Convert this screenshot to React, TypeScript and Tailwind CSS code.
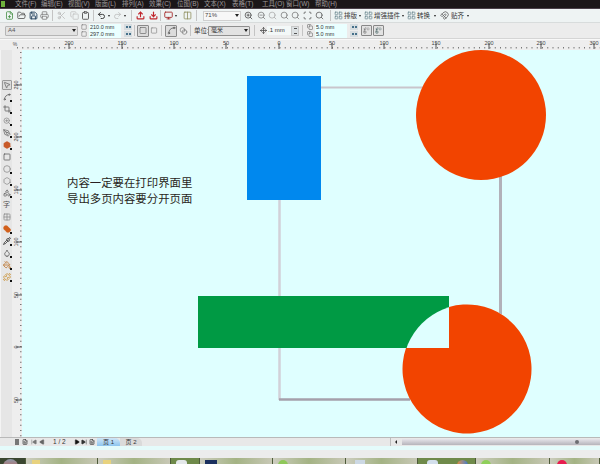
import React from "react";
import {
  FilePlus, FolderOpen, Save, Printer, Scissors, Copy, Clipboard, Undo2, Redo2,
  ZoomIn, ZoomOut, Search, MousePointer2, Spline, Crop, PenTool, Square, Circle,
  Hexagon, Shapes, Grid2x2, Pipette, PaintBucket, Droplet, Monitor, Columns2,
  Move, FileText, Blend, Scan, Upload, Download, LayoutGrid, Magnet,
  Puzzle, Play, SkipForward, SkipBack, Replace,
} from "lucide-react";

const cjk = "font-['Liberation_Sans','Noto_Sans_CJK_SC',sans-serif]";

const menus = [
  ["文件(F)", 26], ["编辑(E)", 27], ["视图(V)", 27], ["版面(L)", 27], ["排列(A)", 27], ["效果(C)", 28],
  ["位图(B)", 27], ["文本(X)", 28], ["表格(T)", 30], ["工具(O)", 24], ["窗口(W)", 29], ["帮助(H)", 27],
] as const;

function MenuBar() {
  return (
    <div className="h-[9px] bg-[#1b1618] border-b border-[#4a3f48] flex items-center overflow-hidden">
      <div className="w-[4px] h-[6px] bg-[#6fb23c] ml-[1px] mr-[10px]" />
      <div className={`flex text-[6.5px] leading-[8px] text-[#9d9898] ${cjk}`}>
        {menus.map(([t, w]) => (
          <span key={t} className="shrink-0 whitespace-nowrap" style={{ width: w }}>{t}</span>
        ))}
      </div>
    </div>
  );
}

const Sep = ({ cls = "mx-[4px]" }: { cls?: string }) => <div className={`w-px h-[11px] bg-[#c4c4c4] shrink-0 ${cls}`} />;
const Dot = () => <span className="w-0 h-0 border-x-[1.5px] border-x-transparent border-t-[2px] border-t-[#222] shrink-0 mx-[2px]" />;

function Row1() {
  const c = "w-[9px] h-[9px] shrink-0";
  return (
    <div className="h-[14px] bg-[#eef3f3] border-b border-[#d8dcdc] flex items-center pl-[5px] text-[#444] overflow-hidden">
      <FilePlus className={`${c} text-[#3a8a3a]`} strokeWidth={2} />
      <FolderOpen className={`${c} ml-[3px]`} strokeWidth={2} />
      <Save className={`${c} ml-[3px] text-[#24425e]`} strokeWidth={2.5} />
      <Printer className={`${c} ml-[2px] text-[#777]`} strokeWidth={2} />
      <Sep cls="mx-[3px]" />
      <Scissors className={`${c} ml-[1px] text-[#b5b5b5]`} strokeWidth={2} />
      <Copy className={`${c} ml-[4px] text-[#bdbdbd]`} strokeWidth={2} />
      <Clipboard className={`${c} ml-[2px] text-[#555]`} strokeWidth={2.5} />
      <Sep cls="mx-[3px]" />
      <Undo2 className={`${c} text-[#333]`} strokeWidth={2.5} />
      <Dot />
      <Redo2 className={`${c} ml-[1px] text-[#b8b8b8]`} strokeWidth={2} />
      <Dot />
      <Sep cls="ml-[3px] mr-[4px]" />
      <Upload className={`${c} text-[#c0262c]`} strokeWidth={3} />
      <Download className={`${c} ml-[4px] text-[#c0262c]`} strokeWidth={3} />
      <Sep cls="ml-[2px] mr-[3px]" />
      <Monitor className={`${c} text-[#a33]`} strokeWidth={2.5} />
      <Dot />
      <Columns2 className={`${c} ml-[4px] text-[#8a8a55]`} strokeWidth={2} />
      <Sep cls="ml-[4px] mr-[6px]" />
      <div className={`w-[38px] h-[10px] bg-[#f7f7f7] border border-[#cfcfcf] flex items-center justify-between pl-[1px] pr-[1px] text-[6px] text-[#444] shrink-0 ${cjk}`}>
        71%
        <span className="w-0 h-0 border-x-[2.5px] border-x-transparent border-t-[3px] border-t-[#222]" />
      </div>
      <ZoomIn className={`${c} ml-[3px]`} strokeWidth={2} />
      <ZoomOut className={`${c} ml-[4px] text-[#777]`} strokeWidth={2} />
      <Search className={`${c} ml-[2px] text-[#aaa]`} strokeWidth={2} />
      <Search className={`${c} ml-[3px] text-[#777]`} strokeWidth={2} />
      <Search className={`${c} ml-[2px] text-[#777]`} strokeWidth={2} />
      <Scan className={`${c} ml-[3px] text-[#555]`} strokeWidth={2} />
      <Search className={`${c} ml-[3px] text-[#555]`} strokeWidth={2} />
      <Sep cls="ml-[6px] mr-[3px]" />
      <div className={`flex items-center text-[6.5px] leading-[8px] text-[#333] ${cjk}`}>
        <LayoutGrid className={`${c} text-[#6c8890]`} strokeWidth={2} />
        <span className="ml-[1px] w-[13px] whitespace-nowrap">排版</span>
        <Dot />
        <LayoutGrid className={`${c} ml-[1px] text-[#6c8890]`} strokeWidth={2} />
        <span className="ml-[1px] w-[26px] whitespace-nowrap">增强插件</span>
        <Dot />
        <LayoutGrid className={`${c} ml-[1px] text-[#6c8890]`} strokeWidth={2} />
        <span className="ml-[1px] w-[15px] whitespace-nowrap">转换</span>
        <Dot />
        <Magnet className={`${c} ml-[2px] text-[#555]`} strokeWidth={2} />
        <span className="ml-[2px] w-[14px] whitespace-nowrap">贴齐</span>
        <Dot />
      </div>
    </div>
  );
}

const Spin = () => (
  <div className="w-[8px] h-[6px] bg-[#d6dde0] flex items-center justify-center gap-[1px] shrink-0">
    <span className="w-[2px] h-[2px] bg-[#46708a]" />
    <span className="w-[2px] h-[2px] bg-[#46708a]" />
  </div>
);

function Field({ text, icon }: { text: string; icon: React.ReactNode }) {
  return (
    <div className={`h-[7px] flex items-center text-[5.5px] leading-[7px] text-[#333] ${cjk}`}>
      <span className="w-[7px] shrink-0 flex">{icon}</span>
      <span className="w-[32px] ml-[1px] bg-[#eaffff] whitespace-nowrap pl-[1px]">{text}</span>
      <span className="ml-[3px]"><Spin /></span>
    </div>
  );
}

function Toggle({ children, on }: { children: React.ReactNode; on?: boolean }) {
  return (
    <div className={`w-[12px] h-[12px] flex items-center justify-center shrink-0 rounded-[1px] ${on ? "bg-[#dcdcdc] border border-[#8a8a8a]" : ""}`}>
      {children}
    </div>
  );
}

function Row2() {
  return (
    <div className={`h-[16px] bg-[#ececec] border-b border-[#d5d5d5] flex items-center pl-[5px] overflow-hidden ${cjk}`}>
      <div className="w-[73px] h-[10px] bg-[#e2e2e2] border border-[#b5b5b5] rounded-[1px] flex items-center justify-between pl-[2px] pr-[1px] text-[6px] text-[#555] shrink-0">
        A4
        <span className="w-0 h-0 border-x-[2.5px] border-x-transparent border-t-[3px] border-t-[#222]" />
      </div>
      <div className="ml-[3px] flex flex-col shrink-0">
        <Field text="210.0 mm" icon={<Square className="w-[6px] h-[6px] text-[#666]" strokeWidth={2} />} />
        <Field text="297.0 mm" icon={<Square className="w-[6px] h-[6px] text-[#666]" strokeWidth={2} />} />
      </div>
      <Sep cls="mx-[2px]" />
      <Toggle on><Square className="w-[8px] h-[9px] text-[#666]" strokeWidth={2} /></Toggle>
      <Square className="w-[8px] h-[7px] ml-[1px] text-[#777] shrink-0" strokeWidth={2} />
      <Sep cls="mx-[3px]" />
      <Toggle on><Spline className="w-[9px] h-[9px] text-[#555]" strokeWidth={2} /></Toggle>
      <Blend className="w-[9px] h-[8px] ml-[2px] text-[#777] shrink-0" strokeWidth={2} />
      <Sep cls="ml-[2px] mr-[3px]" />
      <span className="text-[6.5px] w-[14px] text-[#333] shrink-0 whitespace-nowrap">单位:</span>
      <div className="w-[42px] h-[10px] bg-[#e2e2e2] border border-[#8f8f8f] rounded-[1px] flex items-center justify-between pl-[2px] pr-[1px] text-[6px] text-[#333] shrink-0">
        毫米
        <span className="w-0 h-0 border-x-[2.5px] border-x-transparent border-t-[3px] border-t-[#222]" />
      </div>
      <Sep cls="ml-[4px] mr-[5px]" />
      <Move className="w-[7px] h-[7px] text-[#444] shrink-0" strokeWidth={2.5} />
      <div className="w-[24px] h-[9px] bg-[#f3f8f8] text-[6px] leading-[9px] text-[#333] shrink-0 pl-[1px]">.1 mm</div>
      <div className="w-[8px] h-[10px] bg-[#dde2e4] flex flex-col items-center justify-between py-[1px] shrink-0 border border-[#c8c8c8]">
        <span className="w-[3px] h-px bg-[#555]" />
        <span className="w-[3px] h-px bg-[#555]" />
      </div>
      <Sep cls="ml-[3px] mr-[4px]" />
      <div className="flex flex-col shrink-0">
        <Field text="5.0 mm" icon={<Copy className="w-[6px] h-[6px] text-[#555]" strokeWidth={2} />} />
        <Field text="5.0 mm" icon={<Copy className="w-[6px] h-[6px] text-[#555]" strokeWidth={2} />} />
      </div>
      <div className="ml-[3px] flex gap-[1px]">
        <div className="w-[11px] h-[11px] bg-[#e2e2e2] border border-[#888] rounded-[1px] flex items-center justify-center">
          <Replace className="w-[7px] h-[7px] text-[#666]" strokeWidth={2} />
        </div>
        <div className="w-[11px] h-[11px] bg-[#e2e2e2] border border-[#888] rounded-[1px] flex items-center justify-center">
          <Replace className="w-[7px] h-[7px] text-[#355]" strokeWidth={2} />
        </div>
      </div>
    </div>
  );
}

function HRuler() {
  const labels = [[69, "200"], [122, "150"], [174, "100"], [226, "50"], [279, "0"], [332, "50"], [384, "100"], [436, "150"], [489, "200"], [541, "250"], [594, "300"]] as const;
  const ticks: number[] = [];
  for (let x = 17; x < 600; x += 5.25) ticks.push(x);
  return (
    <svg className="block w-[600px] h-[11px] bg-[#eeeeee]" viewBox="0 0 600 11">
      <rect x="0" y="0" width="600" height="1" fill="#f8f8f8" />
      {ticks.map((x) => <rect key={x} x={x} y="8" width="1" height="1.5" fill="#777" />)}
      {labels.map(([x, t]) => (
        <g key={x}>
          <rect x={x - 0.5} y="4" width="1" height="6" fill="#555" />
          <text x={x} y="5.5" fontSize="5.5" textAnchor="middle" fill="#444" fontFamily="Liberation Sans">{t}</text>
        </g>
      ))}
      <text x="15" y="7" fontSize="5" fill="#555" textAnchor="middle" fontFamily="Liberation Sans">%</text>
    </svg>
  );
}

function Toolbox() {
  const items = [
    MousePointer2, Spline, Crop, ZoomIn, PenTool, Hexagon, Square, Circle, Hexagon, Shapes, null, Grid2x2, Blend, Pipette, Droplet, PaintBucket, Puzzle,
  ];
  const colors = ["#666", "#555", "#555", "#888", "#666", "#c85a2a", "#555", "#888", "#888", "#666", "#555", "#888", "#d2601c", "#222", "#555", "#b86a1c", "#c8861c"];
  const plain = [0, 6, 10, 11];
  return (
    <div className={`w-[12px] bg-[#e6e6e6] border-l border-[#f4f4f4] flex flex-col items-center pt-[30px] gap-[2px] shrink-0 ${cjk}`}>
      {items.map((I, i) => (
        <div key={i} className={`relative w-[10px] h-[10px] flex items-center justify-center shrink-0 ${i === 0 ? "bg-[#dcdcdc] border border-[#9a9a9a] rounded-[1px]" : ""}`}>
          {I ? <I className="w-[8px] h-[8px]" style={{ color: colors[i] }} fill={i === 12 || i === 5 ? colors[i] : "none"} strokeWidth={2.2} /> : <span className="text-[7px] leading-[8px] text-[#555]">字</span>}
          {!plain.includes(i) && <span className="absolute right-0 bottom-0 w-[2px] h-[2px] bg-[#111]" />}
        </div>
      ))}
    </div>
  );
}

function VRuler() {
  const labels = [[85, "250"], [137, "200"], [190, "150"], [242, "100"], [295, "50"], [347, "0"], [400, "50"]] as const;
  const ticks: number[] = [];
  for (let y = 52; y < 437; y += 5.25) ticks.push(y);
  return (
    <svg className="block w-[10px] h-[387px] bg-[#eeeeee] shrink-0" viewBox="0 50 10 387">
      {ticks.map((y) => <rect key={y} x="8" y={y} width="1.5" height="1" fill="#777" />)}
      {labels.map(([y, t]) => (
        <g key={y}>
          <rect x="4" y={y - 0.5} width="6" height="1" fill="#555" />
          <text x="5.5" y={y} fontSize="5.5" textAnchor="middle" fill="#444" fontFamily="Liberation Sans" transform={`rotate(-90 5.5 ${y})`}>{t}</text>
        </g>
      ))}
    </svg>
  );
}

function Canvas() {
  return (
    <div className="relative flex-1 h-[387px] bg-[#dfffff] overflow-hidden">
      <svg className="absolute left-0 top-0 w-[578px] h-[387px]" viewBox="22 50 578 387">
        <path d="M321 87.5H500" fill="none" stroke="#c9c5cc" strokeWidth="2" />
        <path d="M500.5 87V340" fill="none" stroke="#b2b1b9" strokeWidth="3" />
        <path d="M279.5 200V400" fill="none" stroke="#d2d1d8" strokeWidth="2.5" />
        <path d="M279 399.5H410" fill="none" stroke="#a5a0ab" strokeWidth="2.5" />
        <rect x="247" y="76" width="74" height="124" fill="#0088ee" />
        <circle cx="481" cy="115" r="65" fill="#f24400" />
        <rect x="198" y="296" width="251" height="52" fill="#009a44" />
        <circle cx="467.5" cy="369" r="64.5" fill="#dfffff" />
        <path d="M449 307A64.5 64.5 0 1 1 406 348L449 348Z" fill="#f24400" />
      </svg>
      <div className={`absolute left-[45px] top-[125px] text-[11.4px] leading-[16px] text-[#2a1f22] ${cjk}`}>
        <div>内容一定要在打印界面里</div>
        <div>导出多页内容要分开页面</div>
      </div>
    </div>
  );
}

function StatusRow() {
  const c = "w-[6px] h-[6px] shrink-0 text-[#333]";
  return (
    <div className={`h-[9px] bg-[#e8e8e8] border-t border-[#b9b9b9] flex items-center overflow-hidden ${cjk}`}>
      <div className="w-[22px] shrink-0 flex justify-end pr-[3px]">
        <span className="w-[4px] h-[6px] bg-[#777]" />
      </div>
      <FileText className={c} strokeWidth={2.5} />
      <SkipBack className={`${c} ml-[3px] text-[#777]`} fill="#777" />
      <Play className={`${c} ml-[2px] rotate-180 text-[#666]`} fill="#666" />
      <span className="ml-[8px] w-[18px] text-[6.5px] leading-[8px] text-[#333] whitespace-nowrap shrink-0">1 / 2</span>
      <Play className={`${c} ml-[3px]`} fill="#111" />
      <SkipForward className={`${c} ml-[1px]`} fill="#333" />
      <FileText className={`${c} ml-[2px]`} strokeWidth={2.5} />
      <div className="ml-[2px] w-[23px] h-[8px] bg-gradient-to-b from-[#cfe6f7] to-[#8ec5ef] text-[6px] leading-[8px] text-[#333] text-center rounded-tr-[5px] shrink-0 whitespace-nowrap">页 1</div>
      <div className="w-[22px] h-[8px] bg-[#dadada] text-[6px] leading-[8px] text-[#333] text-center rounded-tr-[5px] shrink-0 whitespace-nowrap">页 2</div>
      <div className="flex-1" />
      <div className="w-px h-[8px] bg-[#bdbdbd]" />
      <div className="w-[9px] flex items-center justify-center shrink-0">
        <span className="w-0 h-0 border-y-[2px] border-y-transparent border-r-[2.5px] border-r-[#222]" />
      </div>
      <div className="w-[198px] h-[6px] ml-[2px] bg-gradient-to-b from-[#e6e4ea] to-[#b6b4bb] relative shrink-0">
        <span className="absolute left-[173px] top-[1px] w-[4px] h-[4px] bg-[#6d6d72] rounded-full" />
      </div>
    </div>
  );
}

function TaskButton({ w, icon, quick }: { w: number; icon: React.ReactNode; quick?: boolean }) {
  return (
    <div
      className={`shrink-0 h-[6px] overflow-hidden flex pt-[2px] pl-[5px] gap-[19px] border-r border-[#4e5c3a] ${quick ? "bg-[#6f8a4a]" : "bg-gradient-to-r from-[#cdcdbf] via-[#a4b384] to-[#c8c8b6]"}`}
      style={{ width: w }}
    >
      {icon}
    </div>
  );
}

function Taskbar() {
  return (
    <div className="h-[6px] bg-[#3b4630] flex overflow-hidden">
      <div className="w-[26px] shrink-0 relative border-r border-[#4e5c3a]">
        <span className="absolute left-[3px] top-px w-[15px] h-[15px] rounded-full bg-gradient-to-b from-[#8b97a8] to-[#c2402e]" />
      </div>
      <TaskButton w={72} icon={<span className="ml-[1px] w-[8px] h-[6px] bg-[#e8d27e]" />} />
      <TaskButton w={73} icon={<span className="w-[8px] h-[6px] bg-[#e8d27e]" />} />
      <TaskButton w={29} quick icon={<span className="w-[11px] h-[6px] rounded-t-[3px] bg-[#e4e8ea]" />} />
      <TaskButton w={73} icon={<span className="w-[12px] h-[6px] bg-[#1a2f5e]" />} />
      <TaskButton w={73} icon={<span className="w-[10px] h-[6px] rounded-t-full bg-[#8fc85a]" />} />
      <TaskButton w={72} icon={<span className="ml-[4px] w-[10px] h-[6px] bg-[#ccd8e4]" />} />
      <TaskButton w={58} quick icon={<><span className="ml-[4px] w-[11px] h-[6px] rounded-t-[3px] bg-[#d3dfec]" /><span className="w-[11px] h-[6px] rounded-t-full bg-gradient-to-r from-[#e08a2e] to-[#3a78c8]" /></>} />
      <TaskButton w={74} icon={<span className="w-[10px] h-[6px] rounded-t-full bg-[#8fcf5a]" />} />
      <TaskButton w={50} icon={<span className="ml-[2px] w-[10px] h-[6px] rounded-t-full bg-[#e81c4e]" />} />
    </div>
  );
}

export default function App() {
  return (
    <div className="w-[600px] h-[464px] overflow-hidden flex flex-col bg-[#dfffff]">
      <MenuBar />
      <Row1 />
      <Row2 />
      <HRuler />
      <div className="flex h-[387px]">
        <Toolbox />
        <VRuler />
        <Canvas />
      </div>
      <StatusRow />
      <div className="h-[4px] bg-[#e4fbfb]" />
      <div className="h-[8px] bg-[#ececec]" />
      <Taskbar />
    </div>
  );
}
